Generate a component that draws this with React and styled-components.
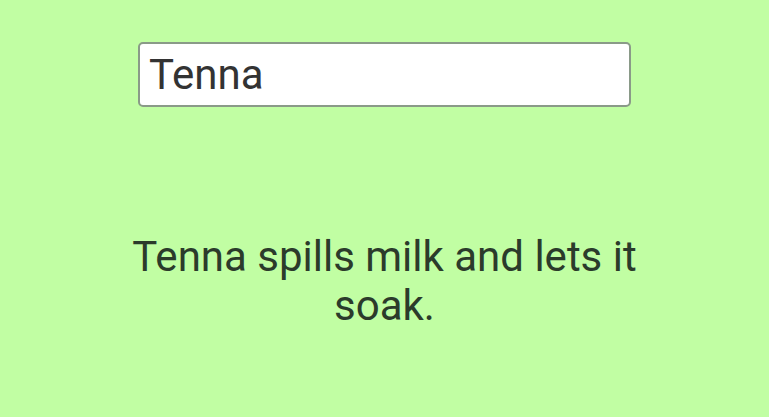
import React, { useState } from 'react';
import styled, { createGlobalStyle } from 'styled-components';

const GlobalStyle = createGlobalStyle`
    html, body {
        margin: 0;
        padding: 0;
        background-color: #c1fea3;
    }
    body {
        font-family: Roboto, "Noto Sans", sans-serif;
    }
`;

const Page = styled.div`
    display: flex;
    flex-direction: column;
    align-items: center;
    padding-top: 42px;
    min-height: 100vh;
    box-sizing: border-box;
`;

const NameInput = styled.input`
    width: 493px;
    height: 65px;
    box-sizing: border-box;
    padding: 0 9px;
    border: 2px solid #8a9a88;
    border-radius: 5px;
    background: #ffffff;
    color: #333333;
    font-family: Roboto, sans-serif;
    font-size: 42px;
    outline: none;
`;

const Sentence = styled.p`
    width: 520px;
    margin: 125px 0 0;
    text-align: center;
    color: #2b3b2b;
    font-family: Roboto, sans-serif;
    font-size: 42px;
    line-height: 49px;
`;

const App = () => {
    const [name, setName] = useState('Tenna');

    return (
        <>
            <GlobalStyle />
            <Page>
                <NameInput
                    type="text"
                    value={name}
                    onChange={(event) => setName(event.target.value)}
                />
                <Sentence>{name} spills milk and lets it soak.</Sentence>
            </Page>
        </>
    );
}

export default App;
